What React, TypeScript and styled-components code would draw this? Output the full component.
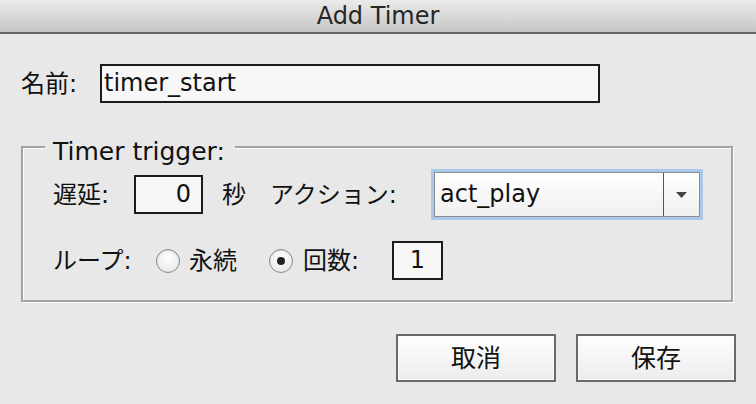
import React from "react";
import styled, { createGlobalStyle } from "styled-components";

const Global = createGlobalStyle`
  html, body { margin: 0; padding: 0; background: #e8e8e8; }
  * { box-sizing: border-box; }
`;

const FONT = `"DejaVu Sans", "Noto Sans CJK JP", sans-serif`;

const Window = styled.div`
  width: 756px;
  height: 404px;
  background: #e8e8e8;
  font-family: ${FONT};
  color: #111;
  display: flex;
  flex-direction: column;
  overflow: hidden;
`;

const TitleBar = styled.div`
  height: 34px;
  flex: none;
  background: linear-gradient(#ebebeb, #c6c6c6);
  border-bottom: 2px solid #666;
  display: flex;
  align-items: center;
  justify-content: center;
  font-size: 24px;
  color: #262626;
  line-height: 1;
  padding-bottom: 1px;
`;

const Body = styled.div`
  display: flex;
  flex-direction: column;
  padding: 30px 20px 0 21px;
`;

const Row = styled.div`
  display: flex;
  align-items: center;
`;

const Label = styled.span<{ $w?: number; $ml?: number }>`
  font-size: 24px;
  line-height: 1;
  white-space: nowrap;
  width: ${(p) => (p.$w ? `${p.$w}px` : "auto")};
  margin-left: ${(p) => p.$ml ?? 0}px;
  flex: none;
`;

const TextBox = styled.div<{ $w: number; $align?: string; $ml?: number }>`
  width: ${(p) => p.$w}px;
  height: 39px;
  margin-left: ${(p) => p.$ml ?? 0}px;
  border: 2px solid #1c1c1c;
  background: #f7f7f7;
  font-size: 24px;
  line-height: 35px;
  padding: 0 ${(p) => (p.$align === "right" ? 10 : 2)}px 0 2px;
  text-align: ${(p) => p.$align ?? "left"};
  flex: none;
  overflow: hidden;
  white-space: nowrap;
`;

const Group = styled.div`
  position: relative;
  margin-top: 43px;
  width: 712px;
  height: 156px;
  border: 2px solid #a3a3a3;
  box-shadow: 1px 1px 0 #fdfdfd, inset 1px 1px 0 #fdfdfd;
  padding: 24px 0 0 30px;
  display: flex;
  flex-direction: column;
  gap: 24px;
`;

const Legend = styled.span`
  position: absolute;
  left: 22px;
  top: -8px;
  font-size: 25px;
  line-height: 24px;
  padding: 0 10px 0 8px;
  background: #e8e8e8;
  white-space: nowrap;
`;

const Select = styled.div`
  width: 266px;
  height: 45px;
  border: 1px solid #8c8c8c;
  box-shadow: 0 0 0 3px #a9c8ea;
  background: linear-gradient(#ffffff, #f0f0f0);
  display: flex;
  align-items: stretch;
  flex: none;
`;

const SelectValue = styled.div`
  flex: 1;
  font-size: 24px;
  line-height: 43px;
  padding-left: 5px;
  border-right: 1px solid #555;
`;

const SelectArrow = styled.div`
  width: 35px;
  display: flex;
  align-items: center;
  justify-content: center;
`;

const Radio = styled.span<{ $on?: boolean; $ml?: number }>`
  width: 24px;
  height: 24px;
  margin-left: ${(p) => p.$ml ?? 0}px;
  border-radius: 50%;
  border: 1px solid #8a8a8a;
  background: radial-gradient(circle at 50% 35%, #ffffff, #e2e2e2);
  box-shadow: inset 0 1px 1px rgba(0, 0, 0, 0.12);
  display: inline-flex;
  align-items: center;
  justify-content: center;
  flex: none;
  &::after {
    content: "";
    display: ${(p) => (p.$on ? "block" : "none")};
    width: 8px;
    height: 8px;
    border-radius: 50%;
    background: #222;
  }
`;

const Buttons = styled.div`
  display: flex;
  justify-content: flex-end;
  gap: 20px;
  margin-top: 32px;
`;

const Button = styled.button`
  width: 160px;
  height: 48px;
  border: 2px solid #6a6a6a;
  background: linear-gradient(#ffffff, #ececec);
  box-shadow: inset 0 0 0 1px #fafafa;
  font-family: ${FONT};
  font-size: 25px;
  color: #111;
  padding: 0;
  line-height: 1;
`;

export default function App() {
  return (
    <Window>
      <Global />
      <TitleBar>Add Timer</TitleBar>
      <Body>
        <Row>
          <Label $w={79}>名前:</Label>
          <TextBox $w={500}>timer_start</TextBox>
        </Row>
        <Group>
          <Legend>Timer trigger:</Legend>
          <Row>
            <Label $w={81}>遅延:</Label>
            <TextBox $w={69} $align="right">0</TextBox>
            <Label $w={48} $ml={19}>秒</Label>
            <Label $w={164}>アクション:</Label>
            <Select>
              <SelectValue>act_play</SelectValue>
              <SelectArrow>
                <svg width="11" height="6" viewBox="0 0 11 6">
                  <path d="M0 0 L11 0 L5.5 6 Z" fill="#444" />
                </svg>
              </SelectArrow>
            </Select>
          </Row>
          <Row>
            <Label $w={103}>ループ:</Label>
            <Radio />
            <Label $w={80} $ml={9}>永続</Label>
            <Radio $on />
            <Label $w={89} $ml={10}>回数:</Label>
            <TextBox $w={51} $align="center">1</TextBox>
          </Row>
        </Group>
        <Buttons>
          <Button>取消</Button>
          <Button>保存</Button>
        </Buttons>
      </Body>
    </Window>
  );
}
